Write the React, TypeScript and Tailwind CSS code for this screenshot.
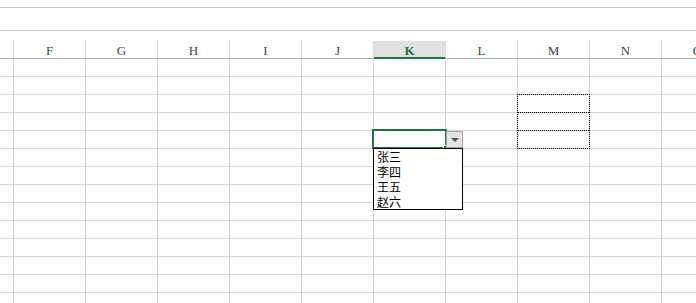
import React from "react";

const columns = ["", "F", "G", "H", "I", "J", "K", "L", "M", "N", "O"];
const rowCount = 14;
const options = ["张三", "李四", "王五", "赵六"];

const HeaderCell: React.FC<{ label: string; index: number }> = ({ label, index }) => {
  const active = label === "K";
  const width = index === 0 ? "w-[14px]" : "w-[72px]";
  return (
    <div
      className={`${width} shrink-0 h-full border-r border-[#dadada] flex items-center justify-center relative ${
        active ? "bg-[#e1e1e1]" : ""
      }`}
    >
      <span
        className={`text-[13px] leading-none pt-[2px] ${
          active ? "text-[#217346] font-bold" : "text-[#444]"
        }`}
        style={{ fontFamily: '"Liberation Serif", serif' }}
      >
        {label}
      </span>
      {active && <div className="absolute left-0 right-0 bottom-[-1px] h-[2px] bg-[#217346]" />}
    </div>
  );
};

const App: React.FC = () => {
  return (
    <div className="relative w-[696px] h-[303px] overflow-hidden bg-white">
      {/* formula bar strip */}
      <div className="h-[7px]" />
      <div className="h-[24px] border-y border-[#c8c8c8]" />
      <div className="h-[10px]" />

      {/* column headers */}
      <div className="flex h-[18px] border-b border-[#ababab]">
        {columns.map((c, i) => (
          <HeaderCell key={i} label={c} index={i} />
        ))}
      </div>

      {/* grid rows */}
      {Array.from({ length: rowCount }).map((_, r) => (
        <div key={r} className="flex h-[18px] border-b border-[#d4d4d4]">
          {columns.map((_, i) => (
            <div
              key={i}
              className={`${i === 0 ? "w-[14px]" : "w-[72px]"} shrink-0 h-full border-r border-[#d4d4d4]`}
            />
          ))}
        </div>
      ))}

      {/* copy marquee on M */}
      <div className="absolute left-[517px] top-[94px] w-[73px] h-[55px] border border-dotted border-black flex flex-col">
        <div className="h-[18px] border-b border-dotted border-black" />
        <div className="h-[18px] border-b border-dotted border-black" />
        <div className="flex-1" />
      </div>

      {/* active cell K */}
      <div className="absolute left-[372px] top-[129px] w-[75px] h-[20px] border-2 border-[#217346]" />
      <div className="absolute left-[443px] top-[145px] w-[5px] h-[5px] bg-[#217346] border border-white" />

      {/* dropdown button */}
      <div className="absolute left-[446px] top-[131px] w-[17px] h-[17px] bg-[#e3e3e3] border border-[#a6a6a6] flex items-center justify-center">
        <svg width="8" height="4" viewBox="0 0 8 4">
          <path d="M0 0H8L4 4Z" fill="#555" />
        </svg>
      </div>

      {/* dropdown list */}
      <div className="absolute left-[373px] top-[148px] w-[90px] h-[62px] border border-black bg-white px-[3px] flex flex-col">
        {options.map((o) => (
          <div
            key={o}
            className="text-[12px] leading-[15px] text-black"
            style={{ fontFamily: '"Noto Sans CJK SC", sans-serif' }}
          >
            {o}
          </div>
        ))}
      </div>
    </div>
  );
};

export default App;
